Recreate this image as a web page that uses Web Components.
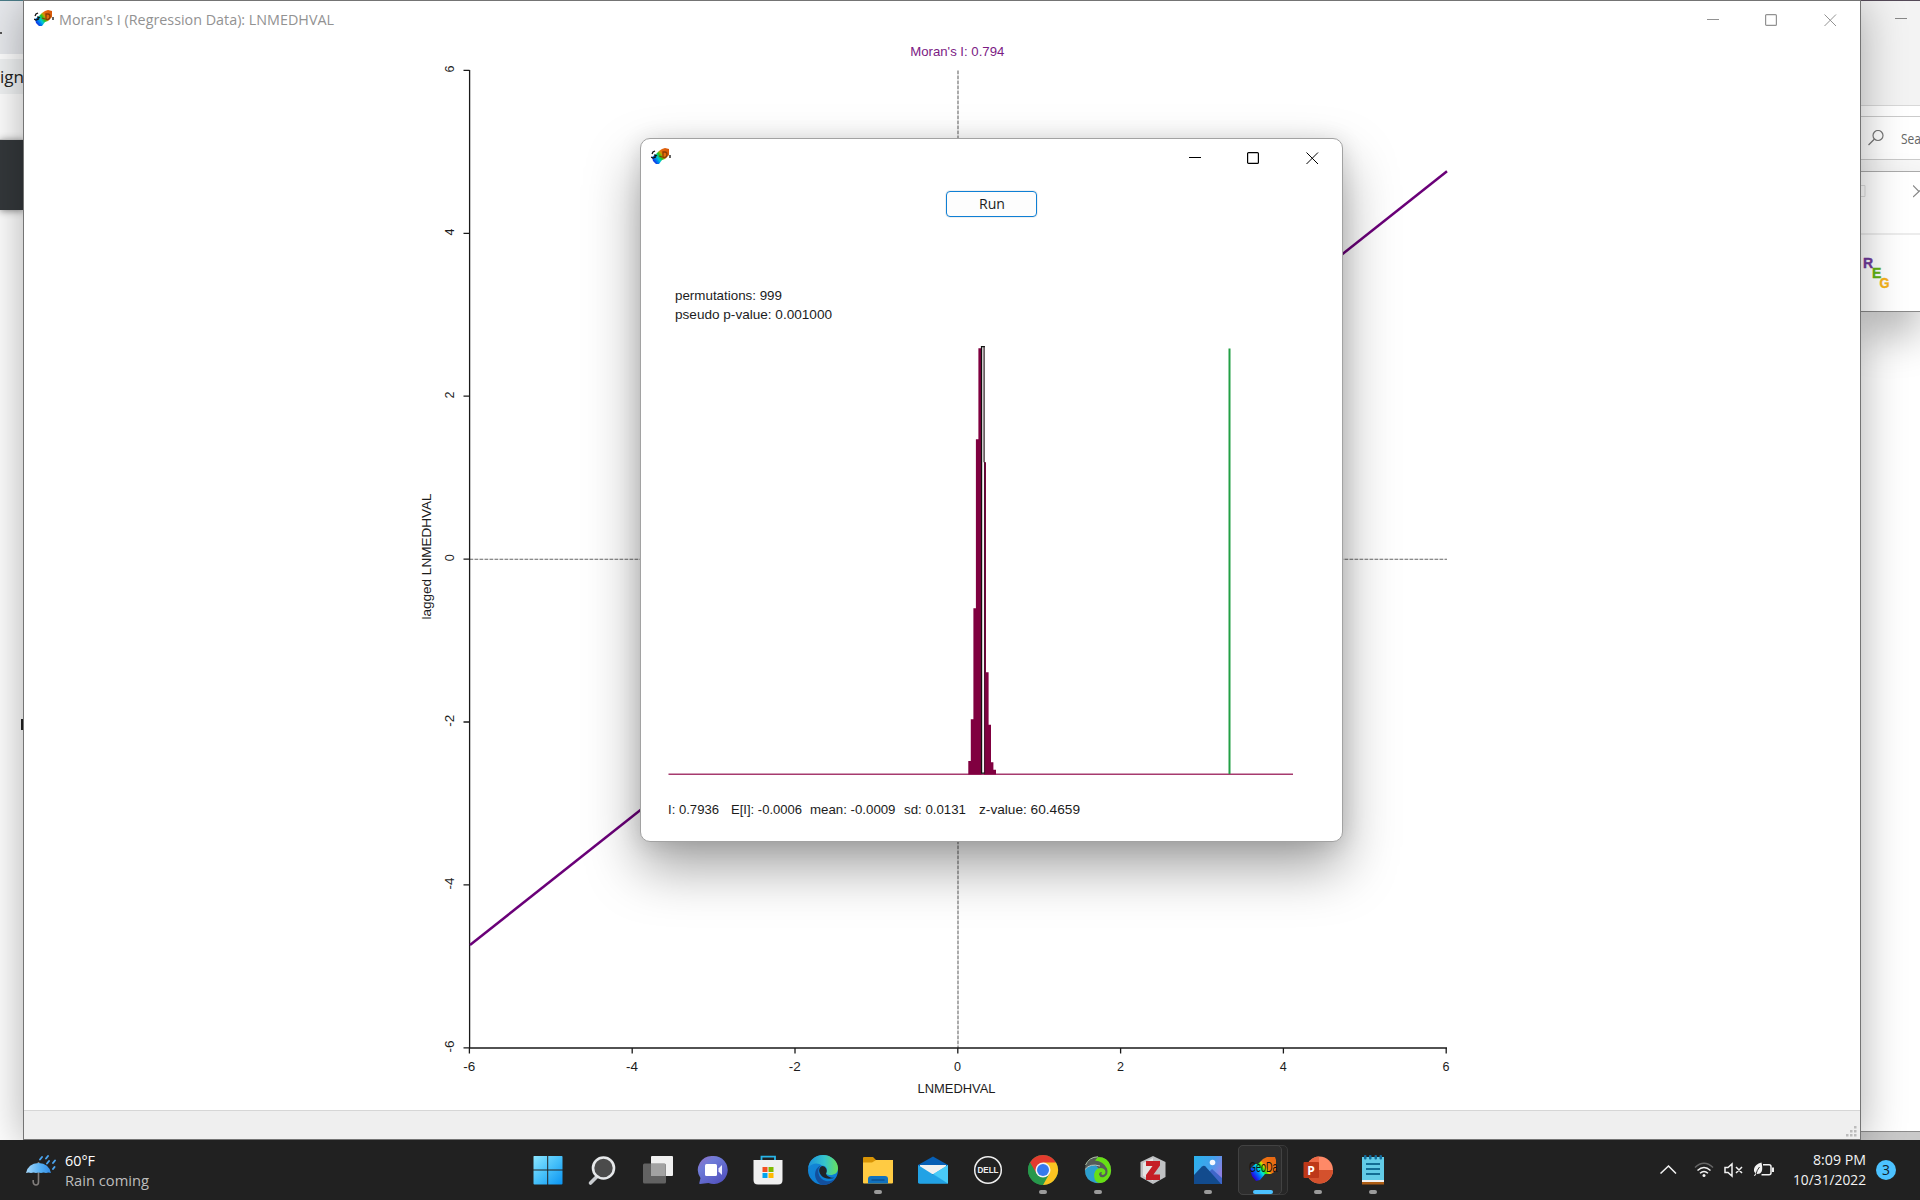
<!DOCTYPE html>
<html lang="en">
<head>
<meta charset="utf-8">
<title>GeoDa desktop</title>
<style>
html,body{margin:0;padding:0;width:1920px;height:1200px;overflow:hidden;background:#fff;font-family:"Open Sans","Noto Sans",sans-serif}
</style>
</head>
<body>
<desk-top></desk-top>
<script>
const define = (name, render) => customElements.define(name, class extends HTMLElement {
  constructor(){ super(); this.attachShadow({mode:'open'}); }
  connectedCallback(){ this.shadowRoot.innerHTML = render(this); }
});

/* One line of text, fitted to a fixed advance width. Baseline is 15px below the top. */
define('fit-text', el => {
  const w = el.getAttribute('w'), size = el.getAttribute('size') || 15, arial = el.hasAttribute('arial');
  const fam = arial ? '"Liberation Sans",Arial,sans-serif' : '"Open Sans","Noto Sans",sans-serif';
  return `<style>:host{display:block;width:${w}px;height:20px;flex:none}svg{display:block;overflow:visible}text{font:${size}px ${fam};fill:currentColor;white-space:pre}</style>
  <svg width="${w}" height="20"><text y="${arial?14:15}" textLength="${w}" lengthAdjust="spacingAndGlyphs">${el.getAttribute('label')}</text></svg>`;
});

/* Small application icon in title bars */
define('geoda-mark', () => `<style>:host{display:block;width:20px;height:17px;flex:none}svg{display:block}</style>
<svg width="20" height="17" viewBox="0 0 20 17"><defs><linearGradient id="g" x1="0" y1=".9" x2="1" y2=".2"><stop offset="0" stop-color="#2000d0"/><stop offset=".2" stop-color="#0068f0"/><stop offset=".36" stop-color="#00c8d8"/><stop offset=".5" stop-color="#20c820"/><stop offset=".62" stop-color="#c8a000"/><stop offset=".7" stop-color="#e86c10"/><stop offset="1" stop-color="#d85808"/></linearGradient></defs>
<path d="M1 9 5 6 8 3 11 1 14 0 18 1 18 7 14 11 11 12 8 16 5 16 2 13Z" fill="url(#g)"/>
<path d="M1 6 2 4 4 3M0 9 2 10 5 9M4 9 4 7 6 8M19 7V10" fill="none" stroke="#111" stroke-width="1.3"/><path d="M12 4h2q2 0 2 2.500t-2 3h-2zM8 8l3 1" fill="none" stroke="#8a3c04" stroke-width="1.3"/></svg>`);

define('window-controls', () => `<style>:host{display:flex;gap:46px;height:13px;flex:none}svg{display:block;fill:none;stroke:currentColor;stroke-width:1.200}</style>
<svg width="12" height="13"><path d="M0 5.500h12" stroke-width="1"/></svg><svg width="12" height="13"><rect x=".6" y=".6" width="10.800" height="10.800" rx="1"/></svg><svg width="13" height="13" style="margin-left:1px"><path d="M.5.5 12 12M12 .5.5 12" stroke-width="1"/></svg>`);

define('moran-plot', () => {
  const xs = [-6,-4,-2,0,2,4,6], X = v => 958.1 + v*81.4, Y = v => 559.3 - v*81.45;
  const text = (s,w,attrs) => `<text ${attrs} textLength="${w}" lengthAdjust="spacingAndGlyphs">${s}</text>`;
  let o = '';
  xs.forEach(v => {
    const w = v<0 ? 12 : 7;
    o += `<path d="M${X(v)-.3} 1048v5.500M463.500 ${Y(v)-.2}h6"/>` +
      text(v,w,`class="t" x="${X(v)-w/2-.5}" y="1071"`) + text(v,w,`class="t" transform="translate(453.500 ${Y(v)+w/2-1.5}) rotate(-90)"`);
  });
  return `<style>:host{display:block;height:1073px}svg{display:block}text{font:13.500px "Liberation Sans",Arial,sans-serif;fill:#1c1c1c;stroke:none}</style>
  <svg width="1836" height="1073" viewBox="24 37 1836 1073" fill="none" stroke="#1a1a1a" stroke-width="1.300">
  <path d="M958 70.500V1048M469.500 559.300H1447" stroke="#666" stroke-width="1.100" stroke-dasharray="3.750 1.250"/>
  <path d="M469.600 70V1048.500M469 1048H1447"/>${o}
  <path d="M470 945 1447 171.300" stroke="#6a0078" stroke-width="2.500"/>
  ${text("Moran's I: 0.794",94,'x="910.300" y="56" style="fill:#7b1a84"')}
  ${text('LNMEDHVAL',78,'x="917.500" y="1093"')}
  ${text('lagged LNMEDHVAL',126,'transform="translate(431 619.500) rotate(-90)"')}
  </svg>`;
});

define('main-window', () => `<style>
:host{display:flex;flex-direction:column;box-sizing:border-box;width:1838px;height:1140px;border:1px solid #747474;background:#fff;box-shadow:0 4px 42px rgba(0,0,0,.32)}
header{display:flex;box-sizing:border-box;height:36px;padding:9px 23px 0 10px;color:#929292}
fit-text{margin:-.5px auto 0 5px}
window-controls{margin-top:4px}
footer{display:flex;box-sizing:border-box;flex:1;justify-content:flex-end;align-items:flex-end;padding:0 3px 2px;border-top:1px solid #d6d6d6;background:#efefef}
</style><header><geoda-mark></geoda-mark><fit-text w="275" label="Moran's I (Regression Data): LNMEDHVAL"></fit-text><window-controls></window-controls></header>
<moran-plot></moran-plot>
<footer><svg width="11" height="11" fill="#bcbcbc"><path d="M8 0h2.500v2.500H8zM4 4h2.500v2.500H4zM8 4h2.500v2.500H8zM0 8h2.500v2.500H0zM4 8h2.500v2.500H4zM8 8h2.500v2.500H8z"/></svg></footer>`);

define('permutation-chart', () => {
  /* Steps of the reference distribution: left edge, top */
  const left = [[968.3,761],[970.8,719.3],[973.4,608.3],[975.9,439.3],[978.4,348.3]];
  const right = [[986,462.3],[988.6,672.3],[991,724.7],[993.4,762.3],[996,769.7]];
  let d = 'M968.3 774.5', r = 'M984 774.5V462.3';
  left.forEach(([x,y]) => d += `H${x}V${y}`);
  d += 'H981.5V774.5Z';
  right.forEach(([x,y]) => r += `V${y}H${x}`);
  r += 'V774.5Z';
  return `<style>:host{display:block}svg{display:block}</style><svg width="701" height="440" viewBox="641 340 701 440">
  <path d="M668.500 774.200H1293" stroke="#a63a6e" stroke-width="1.400"/>
  <path d="${d}${r}" fill="#800040"/>
  <path d="M983 346h2v116.300h-2z" fill="#6b6064"/><path d="M984 462h1.200v311.500H984z" fill="#50102f"/>
  <path d="M982 347h1.300v425.500H982z" fill="#e2dede"/><path d="M981.500 773V346.600H984.800M981 773.200h3.500" stroke="#111" stroke-width="1.200" fill="none"/>
  <path d="M1229.500 348.500V774" stroke="#22a045" stroke-width="2"/></svg>`;
});

define('run-button', () => `<style>:host{display:block}button{display:flex;box-sizing:border-box;width:91px;height:26px;padding:2px 0 0 31.500px;border:1.500px solid #0f7fd4;border-radius:4px;background:#fdfdfd;color:#1c1c1c;box-shadow:0 0 0 1px #f0f0f0}</style><button><fit-text w="26" label="Run"></fit-text></button>`);

define('permutation-dialog', () => `<style>
:host{display:flex;flex-direction:column;box-sizing:border-box;width:703px;height:704px;border:1px solid #a2a2a2;border-radius:10px;background:#fff;color:#1c1c1c;box-shadow:0 26px 54px rgba(0,0,0,.36),0 2px 22px rgba(0,0,0,.12)}
header{display:flex;justify-content:space-between;box-sizing:border-box;height:52px;padding:9px 23px 0 10px}
window-controls{margin-top:4px;color:#000}
run-button{margin-left:305px}
.facts{margin:69px 0 0 34px}.facts fit-text{height:19px}
permutation-chart{margin-top:16px}
.stats{display:flex;margin:20px 0 0 27px}
</style><header><geoda-mark></geoda-mark><window-controls></window-controls></header>
<run-button></run-button>
<div class="facts"><fit-text arial size="13.500" w="107" label="permutations: 999"></fit-text><fit-text arial size="13.500" w="157" label="pseudo p-value: 0.001000"></fit-text></div>
<permutation-chart></permutation-chart>
<div class="stats"><fit-text arial size="13.500" w="51" label="I: 0.7936"></fit-text><fit-text arial size="13.500" w="71" style="margin-left:11.500px" label="E[I]: -0.0006"></fit-text><fit-text arial size="13.500" w="85.500" style="margin-left:8.500px" label="mean: -0.0009"></fit-text><fit-text arial size="13.500" w="62" style="margin-left:8px" label="sd: 0.0131"></fit-text><fit-text arial size="13.500" w="101" style="margin-left:13.500px" label="z-value: 60.4659"></fit-text></div>`);

/* Browser window peeking out on the left */
define('browser-edge', () => `<style>:host{display:flex;flex-direction:column;width:24px;height:1140px;overflow:hidden;background:#fff}
.tabs{box-sizing:border-box;height:54px;border-top:1px solid #4a7c88;background:#e8eaee;padding-top:31px}.tabs i{display:block;width:2px;height:2px;background:#555}
.bar{box-sizing:border-box;height:35px;margin-top:5px;padding-top:9px;background:#f1f3f4;color:#222}
.nav{height:70px;margin-top:45px;border-top:1px solid #ccc;background:#34383b;box-shadow:0 1px 7px rgba(0,0,0,.45)}
.mark{width:4px;height:11px;margin:509px 0 0 21px;background:#222}</style>
<div class="tabs"><i></i></div><div class="bar"><fit-text w="24" size="17" label="ign"></fit-text></div><div class="nav"></div><div class="mark"></div>`);

/* Windows peeking out on the right */
define('office-edge', () => `<style>:host{display:flex;flex-direction:column;width:60px;height:1140px;overflow:hidden;background:#c9c9c9}
.page{display:flex;flex-direction:column;height:1131px;border-bottom:1px solid #8c8c8c;background:#fff}
.head{box-sizing:border-box;height:106px;padding:17px 0 0 35px;border-top:1px solid #554a58;border-bottom:1px solid #d8d8d8;background:#f3f3f3}
.head i{display:block;width:12px;height:1px;background:#888}
.search{display:flex;box-sizing:border-box;height:44px;margin-top:10px;padding:13px 0 0 8px;gap:17px;border:solid #cbcbcb;border-width:1px 0;color:#666;background:#fff}
.search fit-text{margin-top:-1px}
.gap{height:11px;background:#f8f8f8}
.tool{box-sizing:border-box;height:141px;border:solid #aaa;border-width:1px 0;border-bottom:1.500px solid #888;background:#fff;box-shadow:0 24px 42px rgba(0,0,0,.28)}
.cap{display:flex;justify-content:space-between;box-sizing:border-box;height:63px;padding:13px 0 0;border-bottom:2px solid #ececec}
svg{display:block;fill:none;flex:none}text{font:bold 14px "Liberation Sans",Arial,sans-serif}</style>
<div class="page"><div class="head"><i></i></div>
<div class="search"><svg width="16" height="16" stroke="#777" stroke-width="1.200"><circle cx="10" cy="5.500" r="5"/><path d="M6.500 9 .5 15"/></svg><fit-text w="20" label="Sea"></fit-text></div><div class="gap"></div>
<div class="tool"><div class="cap"><svg width="6" height="13" stroke="#ddd"><path d="M0 .5h5v11H0"/></svg><svg width="7" height="13" stroke="#888" stroke-width="1.200"><path d="M0 .5 6 6.500 0 12M6 6.500l1-1"/></svg></div>
<svg width="60" height="72" stroke-width=".4"><text x="3" y="32.500" fill="#713a9b" stroke="#713a9b">R</text><text x="12" y="42.500" fill="#62b312" stroke="#62b312">E</text><text x="19.500" y="52.500" fill="#f7b31a" stroke="#f7b31a" textLength="10" lengthAdjust="spacingAndGlyphs">G</text></svg></div></div>`);

const icons = {
start:`<defs><linearGradient id="a" x2="1" y2="1"><stop stop-color="#8be6ff"/><stop offset=".5" stop-color="#46c0fa"/><stop offset="1" stop-color="#0a94f2"/></linearGradient></defs><path fill="url(#a)" d="M1 1H14.200v13.500H.5V1.500q0-.5.5-.5M15.200 1h13.500q.8 0 .8.8V14.500H15.200zM.5 15.500H14.200v14H1.500q-1 0-1-1zM15.200 15.500h14.300v13q0 1-1 1H15.200z"/>`,
search:`<path d="M9.500 21 2.500 28" stroke="#c9ccd0" stroke-width="3.600" stroke-linecap="round"/><circle cx="15.500" cy="13" r="10.500" fill="#4b4b4b" stroke="#e6e8ea" stroke-width="2.600"/>`,
tasks:`<rect x="8" y="1" width="22" height="20" rx="1" fill="#f0f0f0"/><rect x="0" y="8.500" width="23" height="20" rx="1.500" fill="#6c6c6c" opacity=".87"/><path d="M8 9h14.500v12H8z" fill="#a2a2a2"/>`,
chat:`<defs><linearGradient id="a" x1="0" y1="0" x2=".8" y2="1"><stop stop-color="#9470c4"/><stop offset=".35" stop-color="#6e7bd8"/><stop offset="1" stop-color="#5150bd"/></linearGradient></defs><path fill="url(#a)" d="M15.500 1a14 14 0 1 1-5 27L2 29q-1 0-.7-1l1.200-5A14 14 0 0 1 15.500 1"/><rect x="7" y="9" width="12" height="12" rx="1.500" fill="#fff"/><path d="M20.500 13.500 24 10v10l-3.500-3.500z" fill="#eef"/>`,
store:`<path d="M8.500 6V1.700h13.500V6" fill="none" stroke="#28b5e8" stroke-width="1.800"/><path d="M.5 5h29v20q0 4.500-4.500 4.500H5Q.5 29.500.5 25z" fill="#f0f0f0"/><path fill="#f25022" d="M9.500 12h5v5h-5z"/><path fill="#7fba00" d="M15.500 12h5v5h-5z"/><path fill="#00a4ef" d="M9.500 18h5v5h-5z"/><path fill="#ffb900" d="M15.500 18h5v5h-5z"/>`,
edge:`<defs><linearGradient id="a" x2="1"><stop stop-color="#1c92dc"/><stop offset=".55" stop-color="#35c4cd"/><stop offset="1" stop-color="#68e05b"/></linearGradient><linearGradient id="b" y2="1"><stop stop-color="#1687d4"/><stop offset="1" stop-color="#087bd7"/></linearGradient></defs><circle cx="15" cy="15" r="15" fill="url(#b)"/><path d="M.2 13C1 5 7.500 0 15 0c8.500 0 15 6.500 15 13 0 5-3.500 7-7.500 7-3.500 0-4.500-1.500-4.500-2.500 2-2 1-7-4-7C10 7 3 8 .2 13" fill="url(#a)"/><path d="M13 10.500C8 14 10 24 18 26c4 .8 8-1 9.500-3C25 27.500 20 30.500 14 30 5 26 5 13 13 10.500" fill="#134f9d"/><path d="M14 11c-5 2-3 10 3 12 4 1.500 9 0 10.500-.5-4 1-9-1-9.500-4C20 16 18 11 14 11" fill="#202327"/>`,
folder:`<path d="M0 3q0-1 1-1h9l3 3v5H0z" fill="#d89405"/><path d="M0 7.500h9L13 5h17v22.500q0 1-1 1H1q-1 0-1-1z" fill="#ffcb43"/><path d="M5 28.500V24q0-3 3-3h14q3 0 3 3v4.500z" fill="#1172bf"/><path d="M8.500 25h13" stroke="#0a4d8b" stroke-width="1.300"/>`,
mail:`<path d="M0 10 15 1.500 30 10v4H0z" fill="#075fb5"/><path d="M2 10h26v9H2z" fill="#f1f1f1"/><path d="M30 10v18.500H1L15.500 19z" fill="#2fb4ee"/><path d="M15 19.500 30 28.500H1Q0 28.500 0 27.500V10z" fill="#22a2e5"/><path d="M30 10v18.500L15.500 19z" fill="#49cbf8"/>`,
dell:`<circle cx="15" cy="15" r="13.300" fill="none" stroke="#eee" stroke-width="1.500"/><text x="4.500" y="18.300" textLength="21" lengthAdjust="spacingAndGlyphs" fill="#eee" style="font:bold 9px 'Liberation Sans',sans-serif">DELL</text>`,
chrome:`<circle cx="15" cy="15" r="15" fill="#27984b"/><path d="M15 15 2 7.500A15 15 0 0 1 28 7.500z" fill="#e33b2e"/><path d="M15 7.500h13A15 15 0 0 1 15 30l6.500-11.500z" fill="#fac321"/><path d="M2 7.500 8.500 18.700 15 15V7.500z" fill="#e33b2e"/><path d="M1.900 7.600 8.500 18.800 15 22 15 30A15 15 0 0 1 1.900 7.600" fill="#27984b"/><circle cx="15" cy="15" r="7.500" fill="#f4f4f4"/><circle cx="15" cy="15" r="6" fill="#3479ed"/>`,
arc:`<circle cx="15" cy="15" r="13.200" fill="#555b58"/><path d="M2 15Q6 9 13 10.500L16 14Q13 22 18 27.500L13 28Q2 26 2 15" fill="#2c9fce"/><path d="M2 14.500Q7 8 17 11" fill="none" stroke="#b5c4c4" stroke-width="1"/><path d="M2.500 10Q6 2 15 1.800" fill="none" stroke="#b0c4a8" stroke-width="1"/><path d="M15 2Q25 2 27.500 11q2.500 10-6 16-7 2.500-9.500-2-2.500-7 2-11 5-2.500 8 1 1.500 4.500-2.500 5-2-1-.5-3-3-.5-3 2.500 1 3.500 5 2.500 5-2.500 3-8.500Q20 6 12 5.500z" fill="#66df15"/>`,
zotero:`<path d="M15 1 27.500 7v15L15 29 2.500 22V7z" fill="#bfc1c3"/><path d="M15 3 5 8v13l10 5z" fill="#e3e3e3"/><path d="M8 6h14v4.500l-6.500 9H22V25H8v-5l6.500-9H8z" fill="#c51e26"/>`,
photos:`<defs><linearGradient id="a" x1="0" x2="1" y2=".5"><stop stop-color="#29b3ed"/><stop offset=".6" stop-color="#43a0ec"/><stop offset="1" stop-color="#8b80e3"/></linearGradient></defs><path d="M1 1h28v28H1z" fill="url(#a)"/><path d="M29 25V23L19 14l-6 6 8 9h8z" fill="#3f66c9"/><path d="M1 20 9 11.500q2-1.500 3.500 0L28 29H1z" fill="#124b8d"/><circle cx="19.500" cy="7.500" r="2.800" fill="#f6f8ff"/>`,
geoda:`<defs><linearGradient id="a" x1=".1" y1=".8" x2=".95" y2=".2"><stop stop-color="#2900dc"/><stop offset=".2" stop-color="#0068ff"/><stop offset=".37" stop-color="#00e5d8"/><stop offset=".48" stop-color="#2be510"/><stop offset=".57" stop-color="#dbdd00"/><stop offset=".64" stop-color="#f27610"/><stop offset="1" stop-color="#e86913"/></linearGradient></defs><path d="M2 14 7 9 10 9 15 4 19 2H27L28 5V16L23 19 17 19 12 25 8 26 4 21z" fill="url(#a)"/><text x="1" y="16.500" textLength="28.500" lengthAdjust="spacingAndGlyphs" fill="#101010" style="font:14px 'Liberation Sans',sans-serif">GeoDa</text>`,
ppt:`<circle cx="16.500" cy="15" r="13.500" fill="#fe8967"/><path d="M3 15a13.500 13.500 0 0 0 27 0z" fill="#d4512d"/><path d="M16 1.500v13.500H3A13.500 13.500 0 0 1 16 1.500" fill="#ee6a46"/><rect x=".5" y="7" width="15.500" height="16" rx="1" fill="#bd3819"/><text x="4.200" y="19.500" fill="#fff" style="font:bold 12px 'Open Sans',sans-serif">P</text>`,
notes:`<path d="M4 25h22v4.500H4z" fill="#ad5d14"/><path d="M4 2h22v23.500H4z" fill="#62cbe6"/><path d="M4 25h22v2H4z" fill="#f2f2f2"/><g fill="#126c9c"><rect x="6" width="2.500" height="4.500" rx="1"/><rect x="11" width="2.500" height="4.500" rx="1"/><rect x="16.500" width="2.500" height="4.500" rx="1"/><rect x="21.500" width="2.500" height="4.500" rx="1"/></g><path d="M8 9h14M8 14h14M8 19h14" stroke="#126d94" stroke-width="2"/>`
};
define('task-button', el => {
  const active = el.hasAttribute('active'), run = el.hasAttribute('running');
  return `<style>:host{display:flex;flex-direction:column;align-items:center;justify-content:flex-start;position:relative;width:55px;height:60px;padding-top:15px;box-sizing:border-box}
  svg{display:block;width:30px;height:30px;position:relative;overflow:visible}i{display:block;position:relative;width:${active?20:8}px;height:4px;margin-top:5px;border-radius:2px;background:${active?'#4cc2ff':'#9b9b9b'}}
  .b,.c{position:absolute;box-sizing:border-box;top:5px;height:50px;border:1px solid #424242;border-radius:5px;background:#2d2d2d}.b{left:3px;width:50px;background:#262626;border-color:#393939}.c{left:3px;width:44px}</style>
  ${active?'<div class="b"></div><div class="c"></div>':''}<svg viewBox="0 0 30 30">${icons[el.getAttribute('icon')]}</svg>${active||run?'<i></i>':''}`;
});

define('weather-widget', () => `<style>:host{display:flex;gap:9px;box-sizing:border-box;width:520px;padding:11px 0 0 26px}.t{color:#fff}.t fit-text+fit-text{color:#bdbdbd}svg{margin-top:3px;flex:none}</style>
<svg width="30" height="32"><defs><linearGradient id="a"><stop stop-color="#a6d8fb"/><stop offset=".6" stop-color="#52adf2"/><stop offset="1" stop-color="#328ce6"/></linearGradient></defs><path d="M12.500 8V28q0 3-2.500 3t-2.800-3v-2" fill="none" stroke="#817d7b" stroke-width="1.600"/><path d="M0 19Q2 9.500 12.500 9 23 9.500 25 19q-2.500-1.200-5 0-2.500-1.200-5 0-2.500-1.200-5 0-2.500-1.200-5 0-2.500-1.200-5 0" fill="url(#a)"/><path d="m14 5.500 2-2.500M20 4.500l2-2.500M21 9.500l2-2.500M27 9l2-2.500M27 15l1.500-2" stroke="#4ba4ee" stroke-width="1.900" stroke-linecap="round"/></svg>
<div class="t"><fit-text w="30" label="60°F"></fit-text><fit-text w="84" label="Rain coming"></fit-text></div>`);

define('system-tray', () => `<style>:host{display:flex;align-items:flex-start;color:#f4f4f4;margin-left:auto;padding-right:24px}svg{display:block;flex:none;fill:none;stroke:#f2f2f2;stroke-width:1.500}
.clock{display:flex;flex-direction:column;align-items:flex-end;margin:10px 10px 0 19px}.badge{box-sizing:border-box;width:20px;height:20px;margin-top:20px;padding:0 0 0 6px;border-radius:50%;background:#4cc2ff;color:#10202a}</style>
<svg width="17" height="9" style="margin:25px 17px 0 0"><path d="M.5 8.500 8.500 1l7.500 7.500"/></svg>
<svg width="20" height="16" style="margin:22px 10px 0 0"><path d="M1 5.500Q10-3 19 5.500" stroke="#666"/><path d="M3.500 8.500q6.500-6 13 0M6 11.300q4-3.500 8 0"/><circle cx="10" cy="13.500" r="1.500" fill="#f2f2f2" stroke="none"/></svg>
<svg width="20" height="16" style="margin:22px 10px 0 0"><path d="M1 5.500v5h3l4 3.500V2L4 5.500zM12 5l6 6M18 5l-6 6"/></svg>
<svg width="20" height="17" style="margin:22px 0 0 0"><path d="M9 2.700h6q2 0 2 2v6q0 2-2 2H7.500"/><path d="M18 5.500h2v4.500h-2M0 7Q1 2 7.500.5q2 9-1.500 11-3 .8-3.500 0L1 14H0l1.500-3Q-.5 10 0 7" fill="#f2f2f2" stroke="none"/><path d="M2 12Q3 8 5.500 5" stroke="#222" stroke-width=".9"/></svg>
<div class="clock"><fit-text w="53" label="8:09 PM"></fit-text><fit-text w="73" label="10/31/2022"></fit-text></div><div class="badge"><fit-text w="8" size="14" label="3"></fit-text></div>`);

define('task-bar', () => `<style>:host{display:flex;height:60px;width:1920px;background:#212121}.apps{display:flex}</style><weather-widget></weather-widget><div class="apps">${
['start','search','tasks','chat','store','edge','folder running','mail','dell','chrome running','arc running','zotero','photos running','geoda active','ppt running','notes running'].map(s=>{const [n,f='']=s.split(' ');return `<task-button icon="${n}" ${f}></task-button>`}).join('')}</div><system-tray></system-tray>`);

define('desk-top', () => `<style>:host{display:flex;flex-direction:column;position:relative;width:1920px;height:1200px;overflow:hidden}
.back{display:flex;justify-content:space-between;height:1140px;overflow:hidden;position:relative}
main-window{position:absolute;left:23px;top:0}permutation-dialog{position:absolute;left:640px;top:138px}task-bar{position:relative}</style>
<div class="back"><browser-edge></browser-edge><office-edge></office-edge><main-window></main-window><permutation-dialog></permutation-dialog></div><task-bar></task-bar>`);
</script>
</body>
</html>
